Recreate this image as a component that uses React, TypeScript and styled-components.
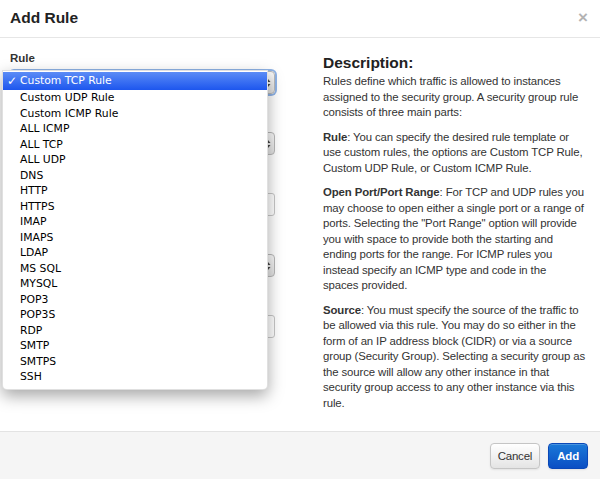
import React from "react";
import styled, { createGlobalStyle } from "styled-components";

const GlobalStyle = createGlobalStyle`
  html, body { margin: 0; padding: 0; background: #fff; }
  body { font-family: "Liberation Sans", Arial, Helvetica, sans-serif; color: #333; }
  * { box-sizing: border-box; }
`;

const Modal = styled.div`
  width: 600px;
  height: 479px;
  display: flex;
  flex-direction: column;
  background: #fff;
  overflow: hidden;
`;

const Header = styled.div`
  height: 38px;
  flex: none;
  display: flex;
  align-items: center;
  justify-content: space-between;
  padding: 0 12px 2px 10px;
  border-bottom: 1px solid #e6e6e6;
`;

const Title = styled.h3`
  margin: 0;
  font-size: 15.5px;
  font-weight: bold;
  color: #222;
`;

const Close = styled.span`
  font-size: 17px;
  font-weight: bold;
  color: #b3b3b3;
  line-height: 1;
`;

const Body = styled.div`
  flex: 1;
  display: grid;
  grid-template-columns: 265px 1fr;
  column-gap: 48px;
  padding: 14px 2px 0 10px;
`;

const FormColumn = styled.div`
  position: relative;
`;

const Group = styled.div`
  margin-bottom: 19px;
`;

const Label = styled.div`
  font-size: 11.5px;
  font-weight: bold;
  line-height: 13px;
  color: #333;
  margin-bottom: 6px;
`;

const SelectBox = styled.div<{ $focused?: boolean }>`
  height: 23px;
  border: 1px solid #b9b9b9;
  border-radius: 4px;
  background: linear-gradient(#fafafa, #e2e2e2);
  display: flex;
  align-items: center;
  justify-content: flex-end;
  padding-right: 3px;
  box-shadow: ${(p) => (p.$focused ? "0 0 0 2px #8fb3e6" : "none")};
`;

const Arrows = styled.svg`
  width: 6px;
  height: 10px;
`;

const InputBox = styled.div`
  height: 23px;
  border: 1px solid #c8c8c8;
  border-radius: 3px;
  background: #fff;
`;

const Menu = styled.div`
  position: absolute;
  left: -8px;
  top: 18px;
  width: 266px;
  padding: 1px 0 4px;
  background: #fff;
  border: 1px solid rgba(0, 0, 0, 0.12);
  border-radius: 0 0 5px 5px;
  box-shadow: 0 6px 16px rgba(0, 0, 0, 0.35);
  font-family: "DejaVu Sans", "Liberation Sans", sans-serif;
  font-size: 10.8px;
  color: #000;
`;

const Item = styled.div<{ $selected?: boolean }>`
  position: relative;
  height: ${(p) => (p.$selected ? "18px" : "15.5px")};
  line-height: ${(p) => (p.$selected ? "18px" : "15.5px")};
  padding-left: 17px;
  white-space: nowrap;
  color: ${(p) => (p.$selected ? "#fff" : "#000")};
  background: ${(p) => (p.$selected ? "linear-gradient(#5b8cf6, #1d56ee)" : "transparent")};
`;

const Check = styled.span`
  position: absolute;
  left: 4px;
  top: 0;
  font-size: 12px;
  font-weight: bold;
`;

const DescColumn = styled.div`
  padding-top: 2px;
`;

const DescTitle = styled.h4`
  margin: 0 0 2px;
  font-size: 15.5px;
  line-height: 18px;
  font-weight: bold;
  color: #222;
`;

const Para = styled.p`
  margin: 0 0 9px;
  font-size: 11.4px;
  line-height: 15.5px;
  letter-spacing: -0.12px;
  white-space: nowrap;
  color: #333;
`;

const Footer = styled.div`
  height: 48px;
  flex: none;
  display: flex;
  align-items: center;
  justify-content: flex-end;
  gap: 8px;
  padding: 1px 12px 0 0;
  background: #f5f5f5;
  border-top: 1px solid #e3e3e3;
`;

const Button = styled.button<{ $primary?: boolean }>`
  height: 26px;
  padding: 0 ${(p) => (p.$primary ? "8px" : "7px")};
  border-radius: 4px;
  font-family: "Liberation Sans", Arial, sans-serif;
  font-size: 11.5px;
  letter-spacing: -0.2px;
  font-weight: ${(p) => (p.$primary ? "bold" : "normal")};
  color: ${(p) => (p.$primary ? "#fff" : "#333")};
  border: 1px solid ${(p) => (p.$primary ? "#0a48b8" : "#c5c5c5")};
  background: ${(p) =>
    p.$primary ? "linear-gradient(#1a79d8, #0b4fc4)" : "linear-gradient(#ffffff, #e4e4e4)"};
  box-shadow: inset 0 1px 0 rgba(255, 255, 255, 0.2), 0 1px 2px rgba(0, 0, 0, 0.08);
`;

const rules = [
  "Custom TCP Rule",
  "Custom UDP Rule",
  "Custom ICMP Rule",
  "ALL ICMP",
  "ALL TCP",
  "ALL UDP",
  "DNS",
  "HTTP",
  "HTTPS",
  "IMAP",
  "IMAPS",
  "LDAP",
  "MS SQL",
  "MYSQL",
  "POP3",
  "POP3S",
  "RDP",
  "SMTP",
  "SMTPS",
  "SSH",
];

const UpDown = () => (
  <Arrows viewBox="0 0 6 10">
    <path d="M0.5 4 L3 1 L5.5 4 Z" fill="#444" />
    <path d="M0.5 6 L3 9 L5.5 6 Z" fill="#444" />
  </Arrows>
);

const fields: { label: string; kind: "select" | "input" }[] = [
  { label: "Rule", kind: "select" },
  { label: "Open Port", kind: "select" },
  { label: "Port", kind: "input" },
  { label: "Remote", kind: "select" },
  { label: "CIDR", kind: "input" },
];

export default function App() {
  return (
    <>
      <GlobalStyle />
      <Modal>
        <Header>
          <Title>Add Rule</Title>
          <Close>×</Close>
        </Header>
        <Body>
          <FormColumn>
            {fields.map((f, i) => (
              <Group key={f.label}>
                <Label>{f.label}</Label>
                {f.kind === "select" ? (
                  <SelectBox $focused={i === 0}>
                    <UpDown />
                  </SelectBox>
                ) : (
                  <InputBox />
                )}
              </Group>
            ))}
            <Menu>
              {rules.map((r, i) => (
                <Item key={r} $selected={i === 0}>
                  {i === 0 && <Check>✓</Check>}
                  {r}
                </Item>
              ))}
            </Menu>
          </FormColumn>
          <DescColumn>
            <DescTitle>Description:</DescTitle>
            <Para>
              Rules define which traffic is allowed to instances
              <br />
              assigned to the security group. A security group rule
              <br />
              consists of three main parts:
            </Para>
            <Para>
              <strong>Rule</strong>: You can specify the desired rule template or
              <br />
              use custom rules, the options are Custom TCP Rule,
              <br />
              Custom UDP Rule, or Custom ICMP Rule.
            </Para>
            <Para>
              <strong>Open Port/Port Range</strong>: For TCP and UDP rules you
              <br />
              may choose to open either a single port or a range of
              <br />
              ports. Selecting the "Port Range" option will provide
              <br />
              you with space to provide both the starting and
              <br />
              ending ports for the range. For ICMP rules you
              <br />
              instead specify an ICMP type and code in the
              <br />
              spaces provided.
            </Para>
            <Para>
              <strong>Source</strong>: You must specify the source of the traffic to
              <br />
              be allowed via this rule. You may do so either in the
              <br />
              form of an IP address block (CIDR) or via a source
              <br />
              group (Security Group). Selecting a security group as
              <br />
              the source will allow any other instance in that
              <br />
              security group access to any other instance via this
              <br />
              rule.
            </Para>
          </DescColumn>
        </Body>
        <Footer>
          <Button>Cancel</Button>
          <Button $primary>Add</Button>
        </Footer>
      </Modal>
    </>
  );
}
